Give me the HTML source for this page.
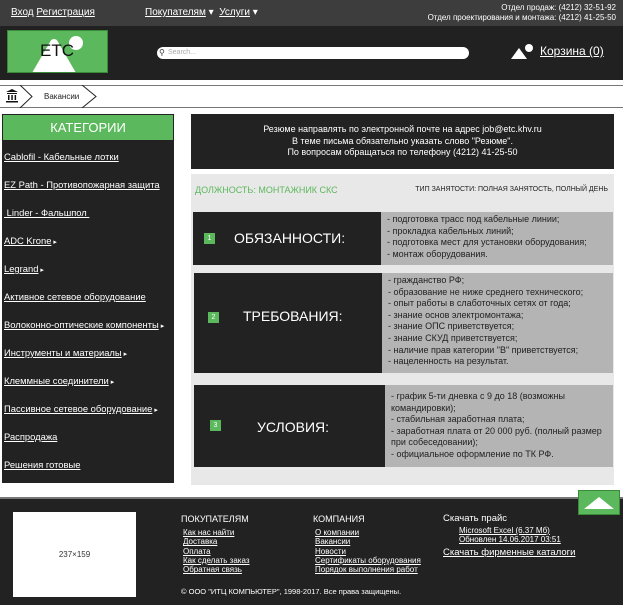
<!DOCTYPE html>
<html><head><meta charset="utf-8"><style>
*{margin:0;padding:0;box-sizing:border-box}
body{width:623px;height:605px;background:#fff;font-family:"Liberation Sans",sans-serif;position:relative;overflow:hidden}
.a{position:absolute}
a,.u{color:inherit;text-decoration:underline}
.side a{position:absolute;left:4px;font-size:9.4px;color:#fff;white-space:nowrap}
.side a i{font-style:normal;font-size:7px;text-decoration:none;display:inline-block;margin-left:2px}
.blk{position:absolute;background:#222}
.rt{position:absolute;background:#b4b4b4;font-size:9px;color:#222;line-height:11.6px;padding:2px 6px}
.num{position:absolute;width:11px;height:11px;background:#5cb85c;color:#fff;font-size:7px;text-align:center;line-height:11px}
.ttl{position:absolute;color:#fff;font-size:14px}
.fl a{display:block;font-size:8px;color:#fff;line-height:9.3px}
</style></head><body>
<div class="a" style="left:0;top:0;width:623px;height:26px;background:#3d3d3d"></div>
<div class="a" style="left:11px;top:7px;font-size:10px;color:#fff"><span class="u">Вход</span> <span class="u">Регистрация</span></div>
<div class="a" style="left:145px;top:7px;font-size:10px;color:#fff"><span class="u">Покупателям</span> ▾ &nbsp;<span class="u">Услуги</span> ▾</div>
<div class="a" style="right:7px;top:3px;font-size:8px;color:#fff;text-align:right;line-height:10px">Отдел продаж: (4212) 32-51-92<br>Отдел проектирования и монтажа: (4212) 41-25-50</div>
<div class="a" style="left:0;top:26px;width:623px;height:54px;background:#212121"></div>
<div class="a" style="left:7px;top:30px;width:101px;height:43px;background:#5cb85c;border:1px solid #3a8a3a;overflow:hidden">
<svg width="101" height="43" style="position:absolute;left:0;top:0"><circle cx="68" cy="12" r="7" fill="#fff"/><path d="M28 43 L46 12 L64 43 Z" fill="#fff" stroke="#fff" stroke-width="8" stroke-linejoin="round"/></svg>
<div class="a" style="left:32px;top:10px;font-size:17px;color:#111">ETC</div></div>
<div class="a" style="left:157px;top:47px;width:312px;height:12px;background:#fff;border-radius:6px;font-size:7px;color:#aaa;padding-left:11px;line-height:12px">Search...</div>
<div class="a" style="left:159px;top:48px;font-size:8px;color:#333">&#9906;</div>
<svg class="a" style="left:510px;top:42px" width="24" height="18"><path d="M1 17 L9 6 L17 17Z" fill="#fff"/><circle cx="19" cy="6" r="4" fill="#fff"/></svg>
<div class="a" style="left:540px;top:44px;font-size:12px;color:#fff"><span class="u">Корзина (0)</span></div>
<div class="a" style="left:0;top:85px;width:623px;height:23px;border-top:1px solid #777;border-bottom:1px solid #777;background:#fff"></div>
<svg class="a" style="left:0;top:85px" width="110" height="23"><path d="M20 0 L32 11.5 L20 23" fill="none" stroke="#222"/><path d="M82 0 L96 11.5 L82 23" fill="none" stroke="#222"/><path d="M6 7 L12 4 L18 7Z M7 8h10v1H7z M8 10h1.5v5H8z M11.3 10h1.5v5h-1.5z M14.6 10h1.5v5h-1.5z M6 16h12v1.5H6z" fill="#111"/></svg>
<div class="a" style="left:44px;top:92px;font-size:8px;color:#222">Вакансии</div>
<div class="a" style="left:2px;top:114px;width:172px;height:369px;background:#222"></div>
<div class="a" style="left:3px;top:115px;width:170px;height:25px;background:#5cb85c;color:#fff;font-size:13px;text-align:center;line-height:25px">КАТЕГОРИИ</div>
<div class="side">
<a style="top:151px">Cablofil - Кабельные лотки</a>
<a style="top:179px">EZ Path - Противопожарная защита</a>
<a style="top:207px">&nbsp;Linder - Фальшпол&nbsp;</a>
<a style="top:235px">ADC Krone<i>▸</i></a>
<a style="top:263px">Legrand<i>▸</i></a>
<a style="top:291px">Активное сетевое оборудование</a>
<a style="top:319px">Волоконно-оптические компоненты<i>▸</i></a>
<a style="top:347px">Инструменты и материалы<i>▸</i></a>
<a style="top:375px">Клеммные соединители<i>▸</i></a>
<a style="top:403px">Пассивное сетевое оборудование<i>▸</i></a>
<a style="top:431px">Распродажа</a>
<a style="top:459px">Решения готовые</a>
</div>
<div class="a" style="left:191px;top:114px;width:423px;height:55px;background:#222;color:#fff;font-size:9px;text-align:center;line-height:11.5px;padding-top:10px">Резюме направлять по электронной почте на адрес job@etc.khv.ru<br>В теме письма обязательно указать слово "Резюме".<br>По вопросам обращаться по телефону (4212) 41-25-50</div>
<div class="a" style="left:191px;top:174px;width:423px;height:311px;background:#e8e8e8"></div>
<div class="a" style="left:195px;top:185px;font-size:9px;color:#5cb85c">ДОЛЖНОСТЬ: МОНТАЖНИК СКС</div>
<div class="a" style="right:15px;top:186px;font-size:7px;color:#222;white-space:nowrap">ТИП ЗАНЯТОСТИ: ПОЛНАЯ ЗАНЯТОСТЬ, ПОЛНЫЙ ДЕНЬ</div>
<div class="blk" style="left:193px;top:212px;width:188px;height:53px"></div>
<div class="rt" style="left:381px;top:212px;width:232px;height:53px">- подготовка трасс под кабельные линии;<br>- прокладка кабельных линий;<br>- подготовка мест для установки оборудования;<br>- монтаж оборудования.</div>
<div class="num" style="left:204px;top:233px">1</div><div class="ttl" style="left:234px;top:230px">ОБЯЗАННОСТИ:</div>
<div class="blk" style="left:194px;top:273px;width:188px;height:100px"></div>
<div class="rt" style="left:382px;top:273px;width:231px;height:100px">- гражданство РФ;<br>- образование не ниже среднего технического;<br>- опыт работы в слаботочных сетях от года;<br>- знание основ электромонтажа;<br>- знание ОПС приветствуется;<br>- знание СКУД приветствуется;<br>- наличие прав категории "В" приветствуется;<br>- нацеленность на результат.</div>
<div class="num" style="left:208px;top:312px">2</div><div class="ttl" style="left:243px;top:308px">ТРЕБОВАНИЯ:</div>
<div class="blk" style="left:194px;top:385px;width:191px;height:82px"></div>
<div class="rt" style="left:385px;top:385px;width:228px;height:82px;padding-top:6px">- график 5-ти дневка с 9 до 18 (возможны командировки);<br>- стабильная заработная плата;<br>- заработная плата от 20 000 руб. (полный размер при собеседовании);<br>- официальное оформление по ТК РФ.</div>
<div class="num" style="left:210px;top:420px">3</div><div class="ttl" style="left:257px;top:419px">УСЛОВИЯ:</div>
<div class="a" style="left:0;top:497px;width:623px;height:108px;background:#222;border-top:2px solid #777"></div>
<div class="a" style="left:578px;top:490px;width:42px;height:25px;background:#5cb85c;border:1px solid #3a8a3a"><svg width="40" height="23"><path d="M5 18 L20 6 L35 18Z" fill="#fff"/></svg></div>
<div class="a" style="left:13px;top:512px;width:123px;height:85px;background:#fff;font-size:8px;color:#333;text-align:center;line-height:85px">237×159</div>
<div class="a" style="left:181px;top:514px;font-size:9px;color:#fff">ПОКУПАТЕЛЯМ</div>
<div class="a fl" style="left:183px;top:528px"><a>Как нас найти</a><a>Доставка</a><a>Оплата</a><a>Как сделать заказ</a><a>Обратная связь</a></div>
<div class="a" style="left:313px;top:514px;font-size:9px;color:#fff">КОМПАНИЯ</div>
<div class="a fl" style="left:315px;top:528px"><a>О компании</a><a>Вакансии</a><a>Новости</a><a>Сертификаты оборудования</a><a>Порядок выполнения работ</a></div>
<div class="a" style="left:443px;top:513px;font-size:9.5px;color:#fff">Скачать прайс</div>
<div class="a fl" style="left:459px;top:526px"><a>Microsoft Excel (6.37 Мб)</a><a>Обновлен 14.06.2017 03:51</a></div>
<div class="a" style="left:443px;top:547px;font-size:9.5px;color:#fff"><span class="u">Скачать фирменные каталоги</span></div>
<div class="a" style="left:181px;top:587px;font-size:7.5px;color:#fff">© ООО "ИТЦ КОМПЬЮТЕР", 1998-2017. Все права защищены.</div>
</body></html>
